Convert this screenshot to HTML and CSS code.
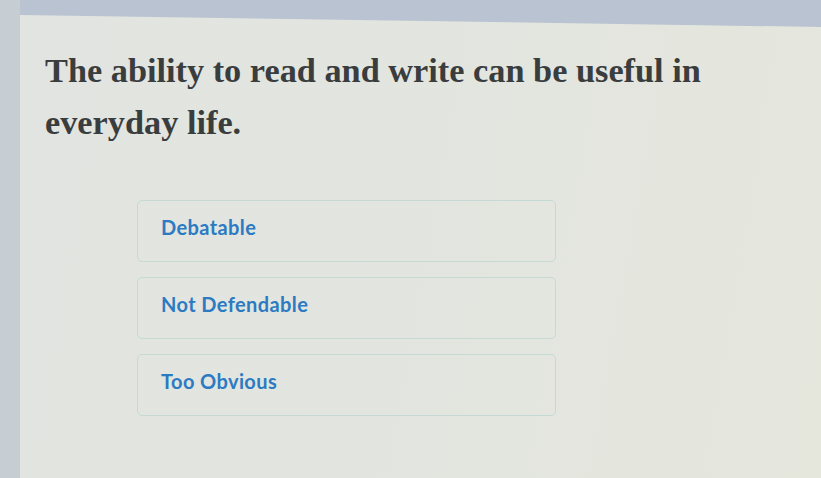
FILE: index.html
```html
<!DOCTYPE html>
<html>
<head>
<meta charset="utf-8">
<link rel="stylesheet" href="styles.css">
</head>
<body>
<div class="screen">
  <div class="side"></div>
  <div class="card">
    <h1 class="question">The ability to read and write can be useful in everyday life.</h1>
    <div class="options">
      <div class="option">Debatable</div>
      <div class="option">Not Defendable</div>
      <div class="option">Too Obvious</div>
    </div>
  </div>
</div>
</body>
</html>
```

FILE: styles.css
```css
html, body {
  margin: 0;
  padding: 0;
}
body {
  width: 821px;
  height: 478px;
  overflow: hidden;
  background: #b9c3d1;
}
.screen {
  display: flex;
  height: 478px;
  padding-top: 15px;
  box-sizing: border-box;
}
.side {
  width: 20px;
  background: #c6cdd3;
  margin-top: -15px;
}
.card {
  flex: 1;
  background: linear-gradient(100deg, #e1e4e0 0%, #e3e5df 60%, #e5e7dd 100%);
  clip-path: polygon(0 0, 100% 12px, 100% 100%, 0 100%);
  padding: 29px 0 0 25px;
  box-sizing: border-box;
}
.question {
  margin: 0;
  width: 680px;
  font-family: "Liberation Serif", serif;
  font-weight: bold;
  font-size: 34.3px;
  line-height: 52px;
  color: #3a3d3e;
}
.options {
  display: flex;
  flex-direction: column;
  gap: 15px;
  margin: 52px 0 0 92px;
}
.option {
  width: 419px;
  height: 62px;
  box-sizing: border-box;
  border: 1px solid #c5dad5;
  border-radius: 5px;
  padding: 0 0 9px 23px;
  display: flex;
  align-items: center;
  font-family: Lato, sans-serif;
  font-weight: bold;
  font-size: 20px;
  letter-spacing: 0.4px;
  color: #2c7bc2;
}
```
